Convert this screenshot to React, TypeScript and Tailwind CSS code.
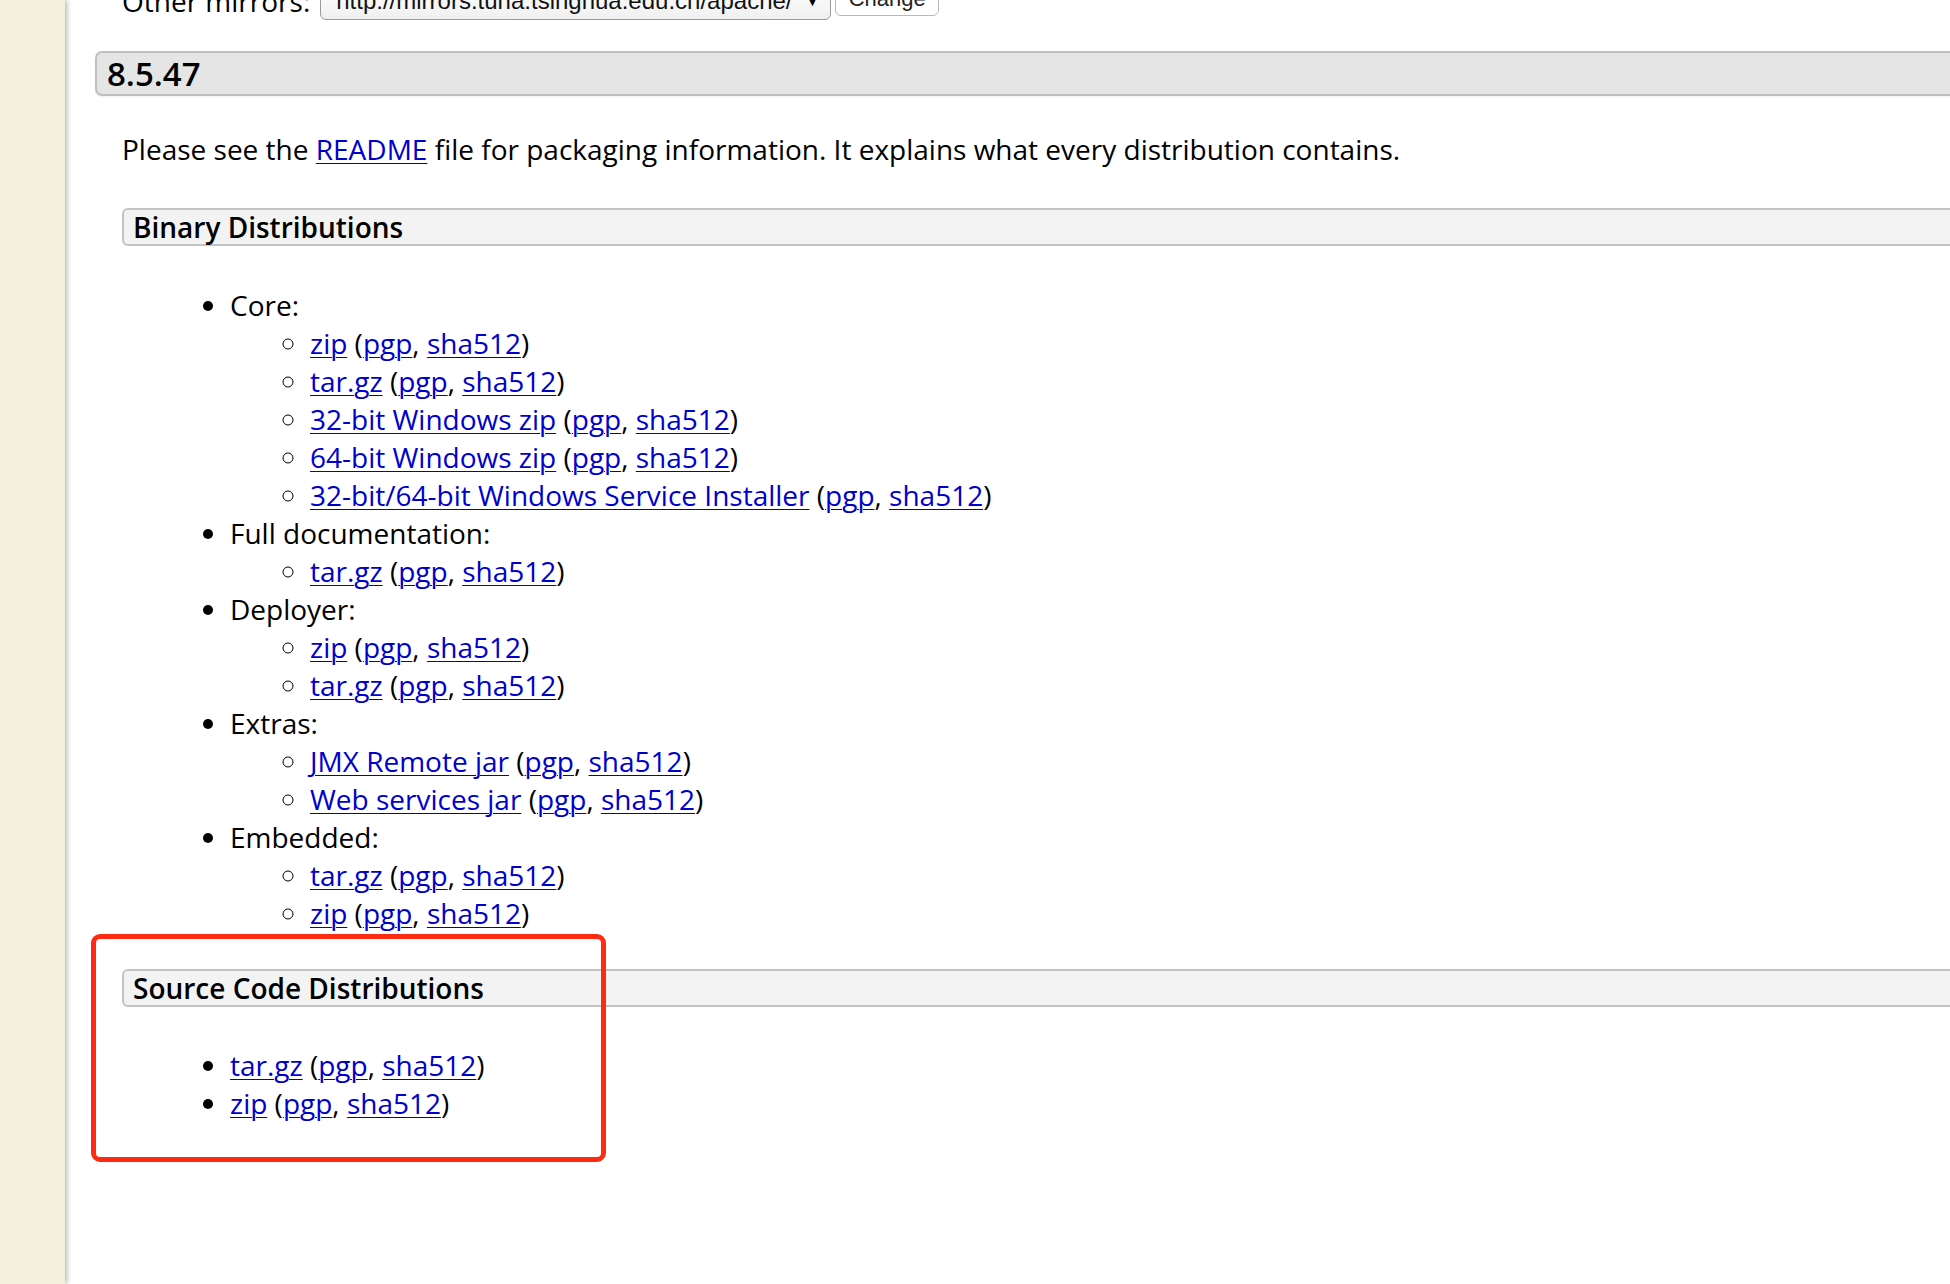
import React from "react";

type Entry = { label: string };

const font = { fontFamily: '"Open Sans", "Noto Sans", sans-serif' };
const sysFont = { fontFamily: '"Liberation Sans", Arial, sans-serif' };

const linkCls = "text-[#0000cc] underline underline-offset-[3px] decoration-1";

function Artifact({ label }: Entry) {
  return (
    <>
      <a href="#" className={linkCls}>
        {label}
      </a>{" "}
      (
      <a href="#" className={linkCls}>
        pgp
      </a>
      ,{" "}
      <a href="#" className={linkCls}>
        sha512
      </a>
      )
    </>
  );
}

const binary: { title: string; items: string[] }[] = [
  {
    title: "Core:",
    items: [
      "zip",
      "tar.gz",
      "32-bit Windows zip",
      "64-bit Windows zip",
      "32-bit/64-bit Windows Service Installer",
    ],
  },
  { title: "Full documentation:", items: ["tar.gz"] },
  { title: "Deployer:", items: ["zip", "tar.gz"] },
  { title: "Extras:", items: ["JMX Remote jar", "Web services jar"] },
  { title: "Embedded:", items: ["tar.gz", "zip"] },
];

function SubHeading({ children }: { children: React.ReactNode }) {
  return (
    <div className="h-[38px] flex items-center pl-[9px] bg-[#f3f3f3] border-2 border-r-0 border-[#c3c3c3] rounded-l-[6px] font-semibold text-[28px] text-black">
      {children}
    </div>
  );
}

export default function App() {
  return (
    <div className="relative flex min-h-[1284px] w-full overflow-hidden bg-white text-black" style={font}>
      <aside className="w-[65px] shrink-0 bg-[#f4eedc] shadow-[2px_0_5px_rgba(0,0,0,0.28)] z-10" />

      <main className="flex-1 pl-[30px] text-[28px] leading-[38px]">
        {/* mirror selector, scrolled mostly out of view */}
        <div className="-mt-[19px] h-[40px] flex items-center pl-[27px] gap-[10px]">
          <span>Other mirrors:</span>
          <div className="flex items-center">
            <div
              className="w-[511px] h-[38px] flex items-center justify-between pl-[15px] pr-[10px] rounded-[6px] border border-[#9a9a9a] bg-gradient-to-b from-white to-[#f0f0f0] text-[24px] text-[#111]"
              style={sysFont}
            >
              <span>http://mirrors.tuna.tsinghua.edu.cn/apache/</span>
              <span className="text-[16px] text-black">▼</span>
            </div>
            <div
              className="ml-[4px] w-[104px] h-[34px] -mt-[4px] flex items-center justify-center rounded-[6px] border border-[#b9b9b9] bg-white text-[22px] text-[#222]"
              style={sysFont}
            >
              Change
            </div>
          </div>
        </div>

        <h3 className="mt-[30px] h-[45px] flex items-center pl-[10px] bg-[#e5e5e5] border-2 border-r-0 border-[#bfbfbf] rounded-l-[7px] font-semibold text-[33px] shadow-[0_2px_0_#f6f6f6]">
          8.5.47
        </h3>

        <section className="pl-[27px]">
          <p className="mt-[34px]">
            Please see the{" "}
            <a href="#" className={linkCls}>
              README
            </a>{" "}
            file for packaging information. It explains what every distribution contains.
          </p>

          <div className="mt-[40px]">
            <SubHeading>Binary Distributions</SubHeading>
          </div>

          <ul className="mt-[40px] list-disc pl-[108px]">
            {binary.map((group) => (
              <li key={group.title}>
                {group.title}
                <ul className="list-[circle] pl-[80px]">
                  {group.items.map((item, i) => (
                    <li key={i}>
                      <Artifact label={item} />
                    </li>
                  ))}
                </ul>
              </li>
            ))}
          </ul>

          <div className="mt-[37px]">
            <SubHeading>Source Code Distributions</SubHeading>
          </div>

          <ul className="mt-[39px] list-disc pl-[108px]">
            <li>
              <Artifact label="tar.gz" />
            </li>
            <li>
              <Artifact label="zip" />
            </li>
          </ul>
        </section>
      </main>

      {/* annotation */}
      <div className="absolute left-[91px] top-[934px] w-[515px] h-[228px] border-[5px] border-[#ff2a12] rounded-[9px] pointer-events-none" />
    </div>
  );
}
